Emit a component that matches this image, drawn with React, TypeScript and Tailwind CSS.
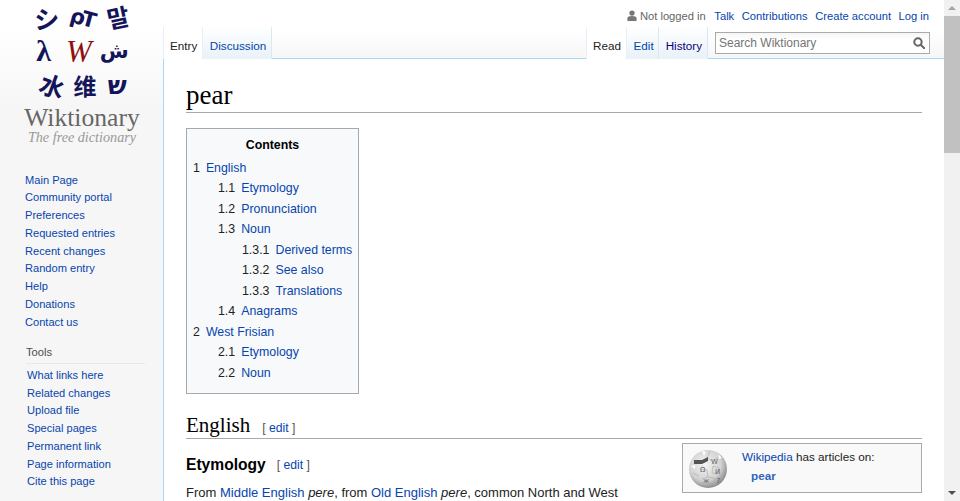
const blue = "text-[#0645ad]";

const mainNav = ["Main Page", "Community portal", "Preferences", "Requested entries", "Recent changes", "Random entry", "Help", "Donations", "Contact us"];
const tools = ["What links here", "Related changes", "Upload file", "Special pages", "Permanent link", "Page information", "Cite this page"];

function NavList({ items }: { items: string[] }) {
  return (
    <ul className="flex flex-col">
      {items.map((item) => (
        <li key={item} className="h-[17.75px] text-[11.1px] leading-[17.75px] text-[#0645ad] whitespace-nowrap">
          {item}
        </li>
      ))}
    </ul>
  );
}

function Logo() {
  return (
    <div className="flex h-[160px] flex-col items-center pl-[1px]">
      <div className="mb-[3px] grid h-[102px] w-[100px] grid-cols-3 grid-rows-3 items-center justify-items-center text-[#14145a] font-['DejaVu_Sans',sans-serif]">
        <span className="mt-[3px] -translate-x-[2px] text-[25px] leading-none font-bold font-['Noto_Sans_CJK_JP',sans-serif]">シ</span>
        <span className="mt-[3px] whitespace-nowrap text-[21px] leading-none font-bold tracking-[-3px] rotate-[15deg]">ρT</span>
        <span className="translate-x-[3px] text-[24px] leading-none font-bold font-['Noto_Sans_CJK_KR',sans-serif] -rotate-[12deg]">말</span>
        <span className="-translate-x-[5px] text-[30px] leading-none font-bold font-['Liberation_Serif',serif]">λ</span>
        <span className="-translate-x-[3px] text-[31px] leading-none italic text-[#8f1010] font-['Liberation_Serif',serif]">W</span>
        <span className="-translate-x-[1px] text-[21px] leading-none font-bold">ش</span>
        <span className="translate-x-[4px] text-[25px] leading-none font-bold font-['Noto_Sans_CJK_SC',sans-serif] rotate-[20deg]">水</span>
        <span className="translate-x-[3px] text-[23px] leading-none font-bold font-['Noto_Sans_CJK_SC',sans-serif]">维</span>
        <span className="translate-x-[2px] text-[25px] leading-none font-bold">ש</span>
      </div>
      <div className="text-[25.6px] leading-[25px] text-[#666] font-['Liberation_Serif',serif]">Wiktionary</div>
      <div className="text-[14.2px] leading-[15px] italic text-[#999] font-['Liberation_Serif',serif]">The free dictionary</div>
    </div>
  );
}

function Sidebar() {
  return (
    <aside className="flex w-[163px] shrink-0 flex-col bg-gradient-to-b from-white from-[28px] to-[#f6f6f6] to-[110px]">
      <Logo />
      <div className="pl-[25px] pt-[11.5px]">
        <NavList items={mainNav} />
      </div>
      <div className="pl-[27px] pt-[13px]">
        <div className="-ml-[1px] mr-[18px] border-b border-[#e8e8e8] pb-[2px] text-[11.2px] leading-[17px] text-[#4d4d4d]">Tools</div>
        <div className="pt-[2.5px]">
          <NavList items={tools} />
        </div>
      </div>
    </aside>
  );
}

function Tab({ label, active, muted }: { label: string; active?: boolean; muted?: boolean }) {
  return (
    <div
      className={
        active
          ? "flex h-[32px] items-center border-x border-[#e4f0fa] bg-white pl-[6px] pr-[5px] pt-[5px] text-[11.7px] text-[#222]"
          : `flex h-[32px] items-center border-r border-[#d8e8f5] bg-gradient-to-b from-white to-[#e8f2f8] pl-[6.5px] pr-[4.5px] pt-[5px] text-[11.7px] ${muted ? "text-[#0b0080]" : blue}`
      }
    >
      {label}
    </div>
  );
}

function Header() {
  return (
    <header className="relative h-[59px] shrink-0 border-b border-[#a7d7f9] bg-gradient-to-b from-white from-[30px] to-[#f6f6f6]">
      <div className="flex h-[27px] items-center justify-end gap-[7.5px] pr-[15px] pt-[5px] text-[11.2px] whitespace-nowrap">
        <span className="mr-[1px] flex items-center gap-[3px] text-[#666]">
          <svg viewBox="0 0 12 13" className="h-[13px] w-[10px]" fill="#777">
            <circle cx="6" cy="3.6" r="3.2" />
            <path d="M0.5 13V9.5C0.5 7.8 2.5 7 6 7s5.5.8 5.5 2.5V13z" />
          </svg>
          Not logged in
        </span>
        <span className={blue}>Talk</span>
        <span className={blue}>Contributions</span>
        <span className={blue}>Create account</span>
        <span className={blue}>Log in</span>
      </div>
      <div className="flex items-start">
        <Tab label="Entry" active />
        <Tab label="Discussion" />
        <div className="flex-1" />
        <Tab label="Read" active />
        <Tab label="Edit" />
        <Tab label="History" muted />
        <div className="ml-[7.5px] mr-[14px] mt-[5px] flex h-[22px] w-[215px] items-center justify-between border border-[#aaa] bg-gradient-to-b from-[#f6f6f6] to-white to-[40%] pb-[1px] pl-[3px] pr-[4px] text-[12px] text-[#757575]">
          Search Wiktionary
          <svg viewBox="0 0 13 13" className="h-[12px] w-[12px]" fill="none" stroke="#666" strokeWidth="2.2">
            <circle cx="5.4" cy="5.4" r="4" />
            <path d="M8.4 8.4l3.8 3.8" strokeLinecap="round" />
          </svg>
        </div>
      </div>
    </header>
  );
}

type TocEntry = { num: string; label: string; level: 1 | 2 | 3 };

const toc: TocEntry[] = [
  { num: "1", label: "English", level: 1 },
  { num: "1.1", label: "Etymology", level: 2 },
  { num: "1.2", label: "Pronunciation", level: 2 },
  { num: "1.3", label: "Noun", level: 2 },
  { num: "1.3.1", label: "Derived terms", level: 3 },
  { num: "1.3.2", label: "See also", level: 3 },
  { num: "1.3.3", label: "Translations", level: 3 },
  { num: "1.4", label: "Anagrams", level: 2 },
  { num: "2", label: "West Frisian", level: 1 },
  { num: "2.1", label: "Etymology", level: 2 },
  { num: "2.2", label: "Noun", level: 2 },
];

function Toc() {
  return (
    <div className="mt-[15px] h-[266px] w-[173px] border border-[#a2a9b1] bg-[#f8f9fa] px-[6px] pt-[7px] text-[12.35px]">
      <div className="pb-[3.5px] text-center font-bold leading-[18px] text-black">Contents</div>
      <ul>
        {toc.map((t) => (
          <li
            key={t.num}
            className={`flex h-[20.55px] items-center gap-[6px] whitespace-nowrap ${t.level === 2 ? "pl-[25px]" : t.level === 3 ? "pl-[49px]" : ""}`}
          >
            <span className="text-[#222]">{t.num}</span>
            <span className={blue}>{t.label}</span>
          </li>
        ))}
      </ul>
    </div>
  );
}

function Wikibox() {
  return (
    <div className="float-right ml-[12px] flex h-[50px] w-[240px] items-start border border-[#aaa] bg-[#f9f9f9] pl-[5px] pt-[3px] text-[11.7px]">
      <svg viewBox="0 0 40 40" className="mt-[2px] h-[40px] w-[40px] shrink-0">
        <defs>
          <radialGradient id="globe" cx="42%" cy="38%" r="65%">
            <stop offset="0%" stopColor="#f4f4f4" />
            <stop offset="65%" stopColor="#d2d2d2" />
            <stop offset="100%" stopColor="#858585" />
          </radialGradient>
        </defs>
        <circle cx="20" cy="20" r="19" fill="url(#globe)" />
        <g stroke="#aaa" strokeWidth="0.6" fill="none">
          <path d="M22 2l-3 7 6 3 6-4M12 20l7 1 1 7-6 2M25 17l6 2-1 6-6-1zM20 28l6 1 1 8M5 24l6 3" />
        </g>
        <path d="M6 11h8l6-3v4l-6 3H6z" fill="#555" />
        <g fill="#666" fontSize="7" fontFamily="DejaVu Sans">
          <text x="12" y="23">Ω</text>
          <text x="23" y="15">W</text>
          <text x="27" y="25">И</text>
          <text x="15" y="34">ж</text>
          <text x="28" y="34">7</text>
        </g>
        <path d="M30 5l4 4-3 1zM3 17l4-1 0 4zM14 2l4 1-2 4z" fill="#fff" />
      </svg>
      <div className="ml-[14px] leading-[19px] text-[#222]">
        <div>
          <span className={blue}>Wikipedia</span> has articles on:
        </div>
        <div className="pl-[9px] font-bold text-[#3366bb]">pear</div>
      </div>
    </div>
  );
}

function Content() {
  return (
    <main className="min-h-0 flex-1 overflow-hidden border-l border-[#a7d7f9] px-[22px] pt-[18px] text-[#222]">
      <h1 className="h-[36px] border-b border-[#a2a9b1] text-[27px] leading-[36px] text-black font-['Liberation_Serif',serif]">pear</h1>
      <Toc />
      <h2 className="mt-[17px] flex h-[28px] items-baseline gap-[12px] border-b border-[#a2a9b1] pt-[1px] text-[21px] leading-[27px] text-black font-['Liberation_Serif',serif]">
        English
        <span className="text-[12.2px] font-['Liberation_Sans',sans-serif] text-[#555]">
          [ <span className={blue}>edit</span> ]
        </span>
      </h2>
      <div className="pt-[4px]">
        <Wikibox />
        <h3 className="flex h-[36px] items-center gap-[11px] pt-[8px] text-[15.6px] font-bold text-black">
          Etymology
          <span className="text-[12.2px] font-normal text-[#555]">
            [ <span className={blue}>edit</span> ]
          </span>
        </h3>
        <p className="pt-[4px] text-[13px] leading-[20px] whitespace-nowrap">
          From <span className={blue}>Middle English</span> <i>pere</i>, from <span className={blue}>Old English</span> <i>pere</i>, common North and West
        </p>
      </div>
    </main>
  );
}

function Scrollbar() {
  return (
    <div className="flex h-full w-[16px] shrink-0 flex-col bg-[#f1f1f1]">
      <div className="flex h-[16px] items-center justify-center">
        <div className="h-0 w-0 border-x-[4px] border-b-[4px] border-x-transparent border-b-[#a3a3a3]" />
      </div>
      <div className="h-[137px] bg-[#c1c1c1]" />
      <div className="flex-1" />
      <div className="flex h-[16px] items-center justify-center">
        <div className="h-0 w-0 border-x-[4px] border-t-[4px] border-x-transparent border-t-[#505050]" />
      </div>
    </div>
  );
}

export default function App() {
  return (
    <div className="flex h-[501px] w-[960px] overflow-hidden bg-white font-['Liberation_Sans',sans-serif]">
      <Sidebar />
      <div className="flex min-w-0 flex-1 flex-col">
        <Header />
        <Content />
      </div>
      <Scrollbar />
    </div>
  );
}
